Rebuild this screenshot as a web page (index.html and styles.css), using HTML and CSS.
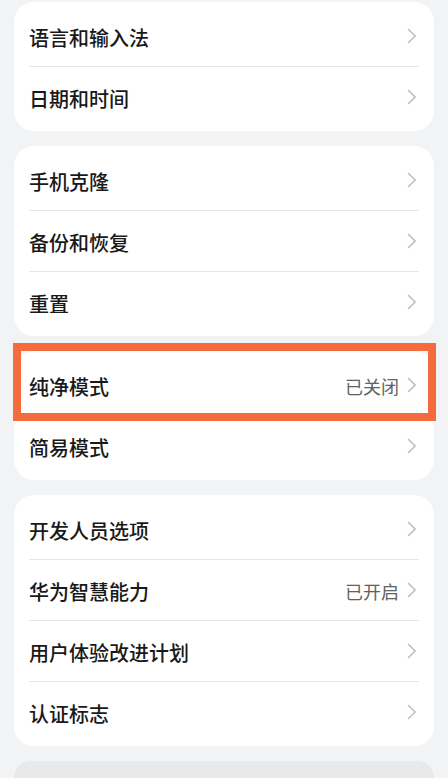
FILE: index.html
```html
<!DOCTYPE html>
<html lang="zh-CN">
<head>
<meta charset="utf-8">
<title>系统和更新</title>
<link rel="stylesheet" href="styles.css">
</head>
<body>
<main class="list">
  <section class="card">
    <div class="row"><span class="label">语言和输入法</span><span class="end"><svg class="chev" viewBox="0 0 10 16"><path d="M1.5 1.5 L8.2 8 L1.5 14.5"/></svg></span></div>
    <div class="divider"></div>
    <div class="row"><span class="label">日期和时间</span><span class="end"><svg class="chev" viewBox="0 0 10 16"><path d="M1.5 1.5 L8.2 8 L1.5 14.5"/></svg></span></div>
  </section>
  <section class="card">
    <div class="row"><span class="label">手机克隆</span><span class="end"><svg class="chev" viewBox="0 0 10 16"><path d="M1.5 1.5 L8.2 8 L1.5 14.5"/></svg></span></div>
    <div class="divider"></div>
    <div class="row"><span class="label">备份和恢复</span><span class="end"><svg class="chev" viewBox="0 0 10 16"><path d="M1.5 1.5 L8.2 8 L1.5 14.5"/></svg></span></div>
    <div class="divider"></div>
    <div class="row"><span class="label">重置</span><span class="end"><svg class="chev" viewBox="0 0 10 16"><path d="M1.5 1.5 L8.2 8 L1.5 14.5"/></svg></span></div>
  </section>
  <section class="card card-marked">
    <div class="row"><span class="label">纯净模式</span><span class="end"><span class="status">已关闭</span><svg class="chev" viewBox="0 0 10 16"><path d="M1.5 1.5 L8.2 8 L1.5 14.5"/></svg></span></div>
    <div class="divider"></div>
    <div class="row"><span class="label">简易模式</span><span class="end"><svg class="chev" viewBox="0 0 10 16"><path d="M1.5 1.5 L8.2 8 L1.5 14.5"/></svg></span></div>
    <div class="highlight"></div>
  </section>
  <section class="card">
    <div class="row"><span class="label">开发人员选项</span><span class="end"><svg class="chev" viewBox="0 0 10 16"><path d="M1.5 1.5 L8.2 8 L1.5 14.5"/></svg></span></div>
    <div class="divider"></div>
    <div class="row"><span class="label">华为智慧能力</span><span class="end"><span class="status">已开启</span><svg class="chev" viewBox="0 0 10 16"><path d="M1.5 1.5 L8.2 8 L1.5 14.5"/></svg></span></div>
    <div class="divider"></div>
    <div class="row"><span class="label">用户体验改进计划</span><span class="end"><svg class="chev" viewBox="0 0 10 16"><path d="M1.5 1.5 L8.2 8 L1.5 14.5"/></svg></span></div>
    <div class="divider"></div>
    <div class="row"><span class="label">认证标志</span><span class="end"><svg class="chev" viewBox="0 0 10 16"><path d="M1.5 1.5 L8.2 8 L1.5 14.5"/></svg></span></div>
  </section>
  <section class="card card-pressed"></section>
</main>
</body>
</html>
```

FILE: styles.css
```css
html, body {
  margin: 0;
  padding: 0;
  background: #f1f3f5;
}

body {
  font-family: "Noto Sans CJK SC", "Noto Sans", sans-serif;
  color: #191919;
}

.list {
  display: flex;
  flex-direction: column;
  gap: 15px;
  padding: 2px 14px 0 14px;
}

.card {
  background: #ffffff;
  border-radius: 20px;
  padding: 4px 0;
  display: flex;
  flex-direction: column;
}

.card-marked {
  position: relative;
}

.card-pressed {
  background: #e8e9eb;
  height: 17px;
  padding: 0;
  border-radius: 20px 20px 0 0;
}

.row {
  height: 60px;
  display: flex;
  align-items: center;
  justify-content: space-between;
  padding: 0 17px 0 15px;
}

.label {
  font-size: 20px;
  font-weight: 500;
  line-height: 24px;
  padding-top: 3px;
  color: #191919;
}

.end {
  display: flex;
  align-items: center;
}

.status {
  font-size: 18px;
  line-height: 22px;
  padding-top: 2px;
  color: #616161;
  margin-right: 8px;
}

.chev {
  width: 10px;
  height: 16px;
  fill: none;
  stroke: #bdbdbd;
  stroke-width: 1.6;
  stroke-linecap: round;
  stroke-linejoin: round;
}

.divider {
  height: 1px;
  background: #e6e6e6;
  margin: 0 15px;
}

.highlight {
  position: absolute;
  top: -8px;
  left: -1px;
  width: 423px;
  height: 78px;
  box-sizing: border-box;
  border: 8px solid #f46c3e;
  pointer-events: none;
}
```
